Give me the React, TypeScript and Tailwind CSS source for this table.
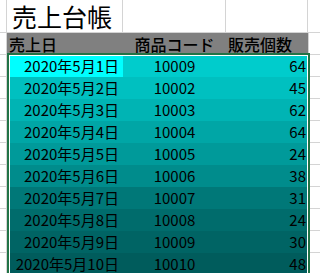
import React from "react";

const data: [string, string, number][] = [
  ["2020年5月1日", "10009", 64],
  ["2020年5月2日", "10002", 45],
  ["2020年5月3日", "10003", 62],
  ["2020年5月4日", "10004", 64],
  ["2020年5月5日", "10005", 24],
  ["2020年5月6日", "10006", 38],
  ["2020年5月7日", "10007", 31],
  ["2020年5月8日", "10008", 24],
  ["2020年5月9日", "10009", 30],
  ["2020年5月10日", "10010", 48],
];

const fills = [204, 192, 180, 166, 154, 140, 120, 108, 100, 92];

function hex(v: number) {
  const h = Math.round(v).toString(16).padStart(2, "0");
  return `#00${h}${h}`;
}

export default function App() {
  return (
    <div className="relative w-[320px] h-[273px] overflow-hidden bg-white text-black font-['Noto_Sans_CJK_JP',sans-serif]">
      {/* title row */}
      <div className="flex h-[33px]">
        <div className="w-[7px] shrink-0 border-r border-b border-[#d4d4d4]" />
        <div className="w-[116px] shrink-0 border-r border-b border-[#d4d4d4] flex items-center pl-[5px] text-[25px] leading-[32px]">
          売上台帳
        </div>
        <div className="w-[103px] shrink-0 border-r border-b border-[#d4d4d4]" />
        <div className="w-[82px] shrink-0 border-r border-b border-[#d4d4d4]" />
        <div className="flex-1 border-b border-[#d4d4d4]" />
      </div>
      {/* header row */}
      <div className="flex h-[22px] text-[16px] leading-[22px] font-medium">
        <div className="w-[7px] shrink-0 border-r border-b border-[#d4d4d4]" />
        <div className="w-[116px] shrink-0 bg-[#808080] flex items-center pl-[2px]">売上日</div>
        <div className="w-[103px] shrink-0 bg-[#808080] flex items-center justify-center">商品コード</div>
        <div className="w-[82px] shrink-0 bg-[#808080] flex items-center pl-[2px]">販売個数</div>
        <div className="flex-1 border-b border-l border-[#d4d4d4]" />
      </div>
      {/* data rows */}
      {data.map(([d, c, n], i) => (
        <div key={i} className="flex h-[22px] text-[15px] leading-[22px]">
          <div className="w-[7px] shrink-0 border-r border-b border-[#d4d4d4]" />
          <div
            className="w-[116px] shrink-0 flex items-center justify-end pr-[4px]"
            style={{ backgroundColor: i === 0 ? "#00ffff" : hex(fills[i]) }}
          >
            {d}
          </div>
          <div
            className="w-[103px] shrink-0 flex items-center justify-center"
            style={{ backgroundColor: hex(fills[i]) }}
          >
            {c}
          </div>
          <div
            className="w-[82px] shrink-0 flex items-center justify-end pr-[2px]"
            style={{ backgroundColor: hex(fills[i]) }}
          >
            {n}
          </div>
          <div className="flex-1 border-b border-l border-[#d4d4d4]" />
        </div>
      ))}
      {/* selection border */}
      <div className="absolute left-[7px] top-[53px] w-[303px] h-[240px] border-2 border-[#217346] pointer-events-none">
        <div className="w-full h-full border border-white" />
      </div>
    </div>
  );
}
